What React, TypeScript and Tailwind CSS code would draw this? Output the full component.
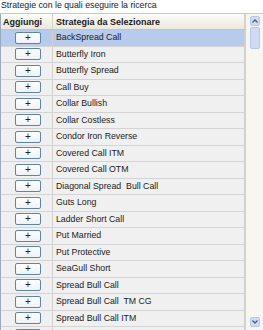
import React from "react";

const strategie = [
  "BackSpread Call",
  "Butterfly Iron",
  "Butterfly Spread",
  "Call Buy",
  "Collar Bullish",
  "Collar Costless",
  "Condor Iron Reverse",
  "Covered Call ITM",
  "Covered Call OTM",
  "Diagonal Spread  Bull Call",
  "Guts Long",
  "Ladder Short Call",
  "Put Married",
  "Put Protective",
  "SeaGull Short",
  "Spread Bull Call",
  "Spread Bull Call  TM CG",
  "Spread Bull Call ITM",
  "",
];

export default function App() {
  return (
    <div className="w-[263px] h-[330px] overflow-hidden bg-white font-['Liberation_Sans',Arial,sans-serif] text-[8.75px] text-[#1a1a1a]">
      <div className="h-[13px] pl-[1px] leading-[10px] text-[#222]">
        Strategie con le quali eseguire la ricerca
      </div>
      <div className="flex h-[317px] border-t border-[#c9c9c9]">
        {/* griglia */}
        <div className="w-[245px] border-l border-[#9aa9bd] bg-[#f1f1f1] overflow-hidden">
          <div className="flex h-[16px] border-b border-[#c8c4b4] bg-gradient-to-b from-[#fdfdfa] to-[#ebe8dc] font-bold text-[9px] leading-[16px]">
            <div className="w-[52px] pl-[2px] border-r border-[#d6d3c6]">Aggiungi</div>
            <div className="flex-1 pl-[3px] border-r border-[#d6d3c6]">Strategia da Selezionare</div>
          </div>
          {strategie.map((s, i) => (
            <div
              key={i}
              className={
                "flex h-[16.5px] border-b border-[#d4d4d4] " +
                (i === 0 ? "bg-[#b7cbec]" : "bg-[#f0f0f0]")
              }
            >
              <div className="w-[52px] flex items-center justify-center border-r border-[#d0d0d0]">
                <div className="ml-[3px] w-[26px] h-[12px] rounded-[2px] border border-[#5e84ae] bg-gradient-to-b from-white to-[#eef1f6] flex items-center justify-center leading-none text-[10px] text-[#222]">
                  {s ? "+" : ""}
                </div>
              </div>
              <div className="flex-1 pl-[3px] flex items-center whitespace-pre border-r border-[#d0d0d0]">
                {s}
              </div>
            </div>
          ))}
        </div>
        {/* scrollbar */}
        <div className="flex-1 border-l border-[#d2d2d2] bg-[#f7f6f1] flex flex-col items-center pt-[2px]">
          <div className="w-[10px] h-[10px] rounded-[2px] border border-[#b6c9ea] bg-[#cddbf5] flex items-center justify-center">
            <svg width="6" height="4" viewBox="0 0 6 4">
              <path d="M0.5 3.5 L3 1 L5.5 3.5" fill="none" stroke="#4a5f88" strokeWidth="1.3" />
            </svg>
          </div>
          <div className="w-[10px] h-[22px] mt-[1px] rounded-[2px] border border-[#b6c9ea] bg-[#cddbf5]" />
          <div className="flex-1" />
          <div className="w-[10px] h-[10px] mb-[3px] rounded-[2px] border border-[#b6c9ea] bg-[#cddbf5] flex items-center justify-center">
            <svg width="6" height="4" viewBox="0 0 6 4">
              <path d="M0.5 0.5 L3 3 L5.5 0.5" fill="none" stroke="#4a5f88" strokeWidth="1.3" />
            </svg>
          </div>
        </div>
      </div>
    </div>
  );
}
